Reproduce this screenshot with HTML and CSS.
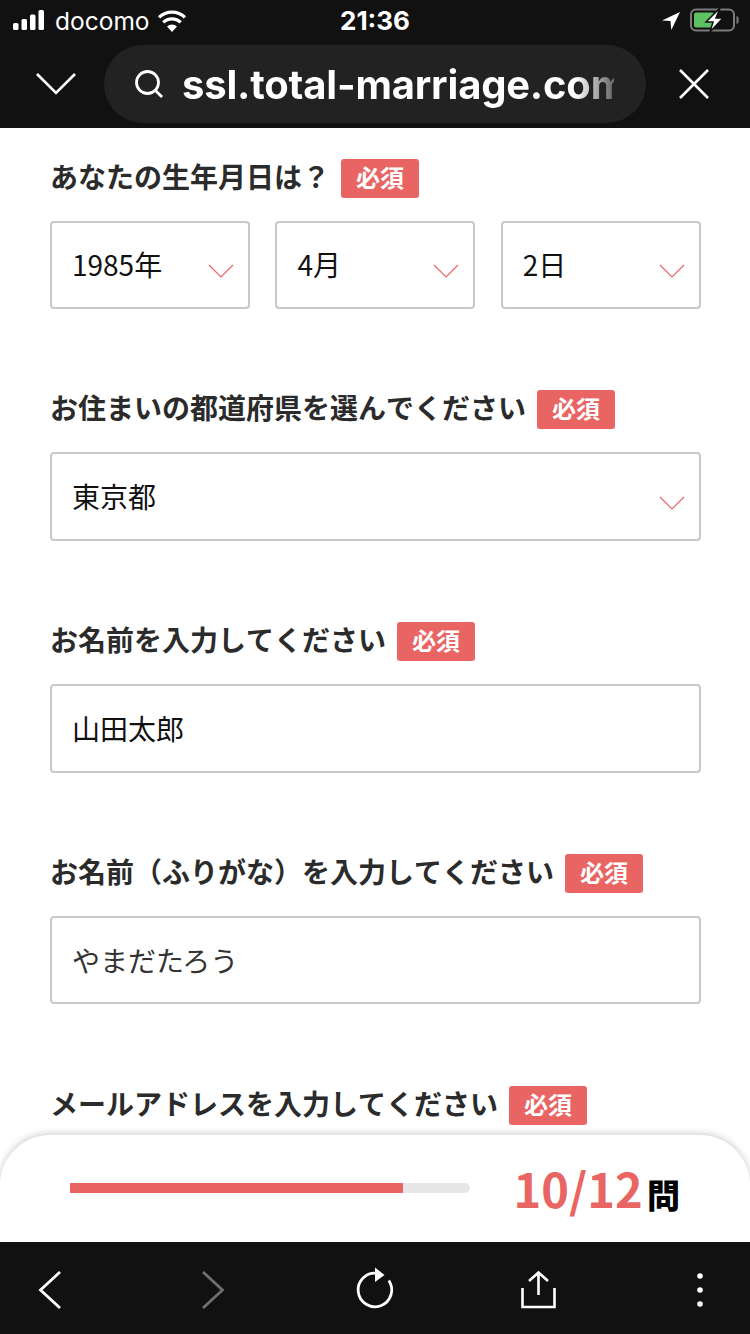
FILE: index.html
```html
<!DOCTYPE html>
<html lang="ja">
<head>
<meta charset="utf-8">
<title>フォーム</title>
<link rel="stylesheet" href="styles.css">
</head>
<body>
<div class="phone">
  <header class="top">
    <div class="status">
      <div class="status-left">
        <svg class="signal" width="32" height="20" viewBox="0 0 32 20"><rect x="0" y="13" width="5.500" height="7" rx="1.500"/><rect x="8.500" y="9" width="5.500" height="11" rx="1.500"/><rect x="17" y="4.500" width="5.500" height="15.500" rx="1.500"/><rect x="25.500" y="0" width="5.500" height="20" rx="1.500"/></svg>
        <span class="carrier">docomo</span>
        <svg class="wifi" width="30" height="22" viewBox="0 0 32 24"><path d="M16 24l-5.500-6a8 8 0 0 1 11 0z" fill="#fff"/><path d="M6.500 13.500a13.500 13.500 0 0 1 19 0M1.800 8a20.500 20.500 0 0 1 28.400 0" fill="none" stroke="#fff" stroke-width="3.600"/></svg>
      </div>
      <span class="clock">21:36</span>
      <div class="status-right">
        <svg width="20" height="20" viewBox="0 0 20 20"><path d="M19 1L1 9.500l8.500.5.800 9z" fill="#fff"/></svg>
        <svg class="battery" width="50" height="24" viewBox="0 0 50 24"><rect x="1" y="1.500" width="43" height="21" rx="5" fill="none" stroke="#7b7b7b" stroke-width="2"/><rect x="4" y="4.500" width="20" height="15" rx="2" fill="#5ec265"/><path d="M46.500 8v8a3 3 0 0 0 2-4 3 3 0 0 0-2-4z" fill="#7b7b7b"/><path d="M30 0L16 14h7l-3 10 13-14h-7z" fill="#fff" stroke="#111" stroke-width="1.500"/></svg>
      </div>
    </div>
    <div class="urlbar">
      <svg width="40" height="24" viewBox="0 0 40 24"><path d="M1 2l19 19L39 2" fill="none" stroke="#fff" stroke-width="2.600"/></svg>
      <div class="url-pill">
        <svg class="search" width="30" height="30" viewBox="0 0 30 30"><circle cx="13.500" cy="13.500" r="11" fill="none" stroke="#fff" stroke-width="2.800"/><path d="M21.500 21.500l6.500 6.500" stroke="#fff" stroke-width="2.800"/></svg>
        <span class="url-text">ssl.total-marriage.com</span>
      </div>
      <svg width="32" height="32" viewBox="0 0 32 32"><path d="M2 2l28 28M30 2L2 30" stroke="#fff" stroke-width="2.600"/></svg>
    </div>
  </header>

  <main class="form">
    <section class="field">
      <div class="label-row"><h2 class="label">あなたの生年月日は？</h2><span class="badge">必須</span></div>
      <div class="date-grid">
        <div class="box"><span>1985年</span><svg class="caret" width="26" height="14" viewBox="0 0 26 14"><path d="M1 1l12 12L25 1" fill="none" stroke="#e96563" stroke-width="1.200"/></svg></div>
        <div class="box"><span>4月</span><svg class="caret" width="26" height="14" viewBox="0 0 26 14"><path d="M1 1l12 12L25 1" fill="none" stroke="#e96563" stroke-width="1.200"/></svg></div>
        <div class="box"><span>2日</span><svg class="caret" width="26" height="14" viewBox="0 0 26 14"><path d="M1 1l12 12L25 1" fill="none" stroke="#e96563" stroke-width="1.200"/></svg></div>
      </div>
    </section>
    <section class="field">
      <div class="label-row"><h2 class="label">お住まいの都道府県を選んでください</h2><span class="badge">必須</span></div>
      <div class="box"><span>東京都</span><svg class="caret" width="26" height="14" viewBox="0 0 26 14"><path d="M1 1l12 12L25 1" fill="none" stroke="#e96563" stroke-width="1.200"/></svg></div>
    </section>
    <section class="field">
      <div class="label-row"><h2 class="label">お名前を入力してください</h2><span class="badge">必須</span></div>
      <div class="box"><span>山田太郎</span></div>
    </section>
    <section class="field">
      <div class="label-row"><h2 class="label">お名前（ふりがな）を入力してください</h2><span class="badge">必須</span></div>
      <div class="box"><span class="kana">やまだたろう</span></div>
    </section>
    <section class="field">
      <div class="label-row"><h2 class="label">メールアドレスを入力してください</h2><span class="badge">必須</span></div>
    </section>
    <div class="progress">
      <div class="track"><div class="fill" style="width:83.3%"></div></div>
      <div class="count"><span class="count-num">10/12</span><span class="count-unit">問</span></div>
    </div>
  </main>

  <footer class="toolbar">
    <svg width="40" height="40" viewBox="0 0 40 40"><path d="M30 2L10.500 20 30 38" fill="none" stroke="#fff" stroke-width="2.800"/></svg>
    <svg width="40" height="40" viewBox="0 0 40 40"><path d="M10 2l19.500 18L10 38" fill="none" stroke="#6f6f6f" stroke-width="2.800"/></svg>
    <svg class="over" width="40" height="40" viewBox="0 0 40 40"><path d="M22 3.300A16.800 16.800 0 1 0 33.800 10.500" fill="none" stroke="#fff" stroke-width="2.800"/><path d="M20 -2.500l9.500 7.500L20 12z" fill="#fff"/></svg>
    <svg width="40" height="40" viewBox="0 0 40 40"><path d="M20.500 25V3M11 11l9.500-8.500L30 11M4.500 18v19h32V18" fill="none" stroke="#fff" stroke-width="2.600"/></svg>
    <svg width="40" height="40" viewBox="0 0 40 40"><circle cx="20" cy="6" r="2.800"/><circle cx="20" cy="20" r="2.800"/><circle cx="20" cy="34" r="2.800"/></svg>
  </footer>
</div>
</body>
</html>
```
FILE: styles.css
```css
* { box-sizing: border-box; }
html, body { margin: 0; padding: 0; background: #fff; }
body { font-family: "Noto Sans CJK JP", "Noto Sans", sans-serif; }
.phone { width: 750px; height: 1334px; display: flex; flex-direction: column; overflow: hidden; }

.top { height: 128px; flex: none; background: #111; color: #fff; }
.status { height: 44px; display: flex; justify-content: space-between; align-items: center; padding: 0 10px 2px 13px; position: relative; }
.status-left { display: flex; align-items: center; gap: 10px; }
.signal { fill: #fff; margin-bottom: 2px; }
.carrier { font-family: Inter, "Liberation Sans", sans-serif; font-size: 24.500px; line-height: 28px; margin-right: -3px; }
.clock { position: absolute; left: 0; right: 0; top: 7px; text-align: center; font-family: Inter, "Liberation Sans", sans-serif; font-size: 26px; font-weight: 700; line-height: 28px; }
.status-right { display: flex; align-items: center; gap: 9px; }
.battery { margin-bottom: 3px; }

.urlbar { height: 84px; display: flex; align-items: center; padding: 0 24px 4px 36px; }
.url-pill { width: 542px; height: 78px; margin: 0 32px 0 28px; border-radius: 39px; background: #222; display: flex; align-items: center; padding: 0 30px; gap: 18px; overflow: hidden; }
.search { flex: none; }
.url-text { font-family: Inter, "Liberation Sans", sans-serif; font-size: 40px; font-weight: 700; letter-spacing: -.2px; white-space: nowrap; width: 432px; overflow: hidden; flex: none; color: transparent; background: linear-gradient(90deg, #fff 91%, #666 100%); -webkit-background-clip: text; background-clip: text; line-height: 52px; padding-top: 2px; }

.form { flex: 1; position: relative; overflow: hidden; padding: 30.700px 49px 0 50px; }
.field { margin-bottom: 81.250px; }
.label-row { height: 39px; display: flex; align-items: center; gap: 11px; margin-bottom: 23px; }
.label { margin: 0; font-size: 28px; font-weight: 700; line-height: 34px; padding-bottom: 5px; color: #2b2b2b; font-kerning: none; }
.badge { flex: none; height: 39px; width: 78px; background: #e96563; color: #fff; border-radius: 3px; font-size: 24px; font-weight: 700; line-height: 35px; text-align: center; }
.date-grid { display: grid; grid-template-columns: repeat(3, 200px); column-gap: 25.400px; }
.box { height: 88.500px; border: 2px solid #c8c8c8; border-radius: 4px; display: flex; align-items: center; justify-content: space-between; padding: 0 14px 1px 20px; font-size: 28px; color: #111; background: #fff; }
.kana { color: #333; }
.caret { flex: none; margin-top: 13px; }

.progress { position: absolute; left: 0; right: 0; bottom: 0; height: 107px; background: #fff; border-radius: 50px 50px 0 0; box-shadow: 0 -2px 7px rgba(0,0,0,.18); display: flex; align-items: flex-start; padding: 48px 0 0 70px; }
.track { width: 400px; height: 10px; background: #e6e6e6; border-radius: 0 5px 5px 0; }
.fill { height: 100%; background: #e96563; }
.count { display: flex; align-items: baseline; margin: -29px 0 0 43.500px; }
.count-num { font-size: 47px; font-weight: 700; color: #e96563; line-height: 68px; }
.count-unit { font-size: 33px; font-weight: 900; color: #000; margin-left: 4.500px; }

.toolbar { height: 92px; flex: none; background: #111; display: flex; align-items: center; justify-content: space-between; padding: 4px 30px 0; fill: #fff; }
.over { overflow: visible; }
```
